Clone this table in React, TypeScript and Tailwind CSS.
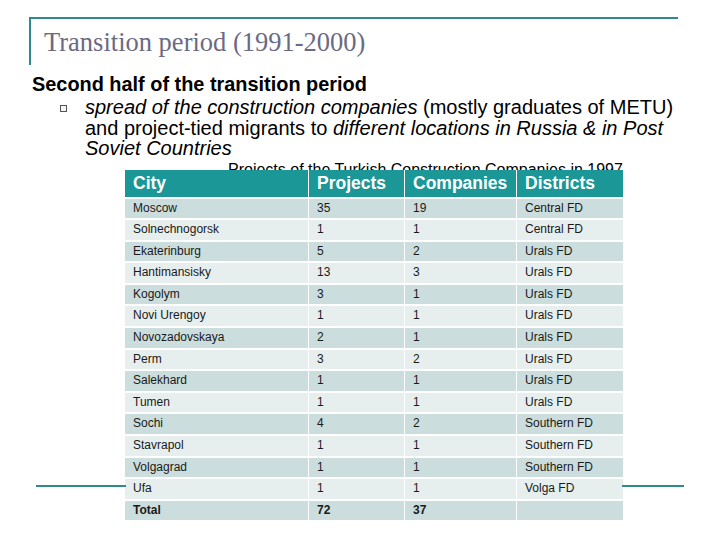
import React from "react";

const rows: [string, string, string, string][] = [
  ["Moscow", "35", "19", "Central FD"],
  ["Solnechnogorsk", "1", "1", "Central FD"],
  ["Ekaterinburg", "5", "2", "Urals FD"],
  ["Hantimansisky", "13", "3", "Urals FD"],
  ["Kogolym", "3", "1", "Urals FD"],
  ["Novi Urengoy", "1", "1", "Urals FD"],
  ["Novozadovskaya", "2", "1", "Urals FD"],
  ["Perm", "3", "2", "Urals FD"],
  ["Salekhard", "1", "1", "Urals FD"],
  ["Tumen", "1", "1", "Urals FD"],
  ["Sochi", "4", "2", "Southern FD"],
  ["Stavrapol", "1", "1", "Southern FD"],
  ["Volgagrad", "1", "1", "Southern FD"],
  ["Ufa", "1", "1", "Volga FD"],
  ["Total", "72", "37", ""],
];

export default function App() {
  return (
    <div
      className="relative w-[720px] h-[540px] overflow-hidden bg-white text-black"
      style={{ fontFamily: '"Liberation Sans", Arial, sans-serif' }}
    >
      {/* bottom decorative lines (under the table) */}
      <div className="absolute left-[36px] top-[485px] w-[90px] h-[2px] bg-[#2e8b8b]" />
      <div className="absolute left-[622px] top-[485px] w-[62px] h-[2px] bg-[#2e8b8b]" />

      {/* title frame */}
      <div className="ml-[29px] mt-[17px] w-[649px] h-[48px] border-t-2 border-l-2 border-[#2e8b8b] pl-[13px] pt-[8px]">
        <div
          className="text-[26.5px] leading-[30px] text-[#6a6a82]"
          style={{ fontFamily: '"Liberation Serif", "Times New Roman", serif' }}
        >
          Transition period (1991-2000)
        </div>
      </div>

      {/* heading */}
      <div className="ml-[32px] mt-[7px] text-[19.9px] leading-[24px] font-bold">
        Second half of the transition period
      </div>

      {/* bullet */}
      <div className="flex ml-[60px] mt-[1px]">
        <div className="w-[25px] pt-[8px] shrink-0">
          <div className="w-[7px] h-[7px] border border-[#555] bg-[#f4f4f4]" />
        </div>
        <div className="text-[20px] leading-[20.5px]">
          <i>spread of the construction companies</i> (mostly graduates of METU)
          <br />
          and project-tied migrants to <i>different locations in Russia &amp; in Post</i>
          <br />
          <i>Soviet Countries</i>
        </div>
      </div>

      {/* caption (partly covered by table) */}
      <div className="ml-[228px] mt-[2px] h-[9px] overflow-hidden">
        <div className="text-[16px] leading-[17px] whitespace-nowrap">
          Projects of the Turkish Construction Companies in 1997
        </div>
      </div>

      {/* table */}
      <div className="ml-[125px] mt-[0px] w-[498px] flex flex-col gap-[2px] bg-white">
        <div className="grid grid-cols-[183px_95px_111px_106px] gap-x-[1px] h-[27px] bg-white">
          {["City", "Projects", "Companies", "Districts"].map((h) => (
            <div
              key={h}
              className="bg-[#1b9797] text-white font-bold text-[17.5px] leading-[27px] pl-[8px]"
            >
              {h}
            </div>
          ))}
        </div>
        {rows.map((r, i) => (
          <div
            key={r[0]}
            className="grid grid-cols-[183px_95px_111px_106px] gap-x-[1px] h-[19.6px]"
          >
            {r.map((c, j) => (
              <div
                key={j}
                className={`${i % 2 === 0 ? "bg-[#cbdddd]" : "bg-[#e6eeee]"} ${
                  i === 14 ? "font-bold" : ""
                } text-[12px] leading-[19.6px] pl-[8px] text-[#1a1a1a] whitespace-nowrap`}
              >
                {c}
              </div>
            ))}
          </div>
        ))}
      </div>
    </div>
  );
}
